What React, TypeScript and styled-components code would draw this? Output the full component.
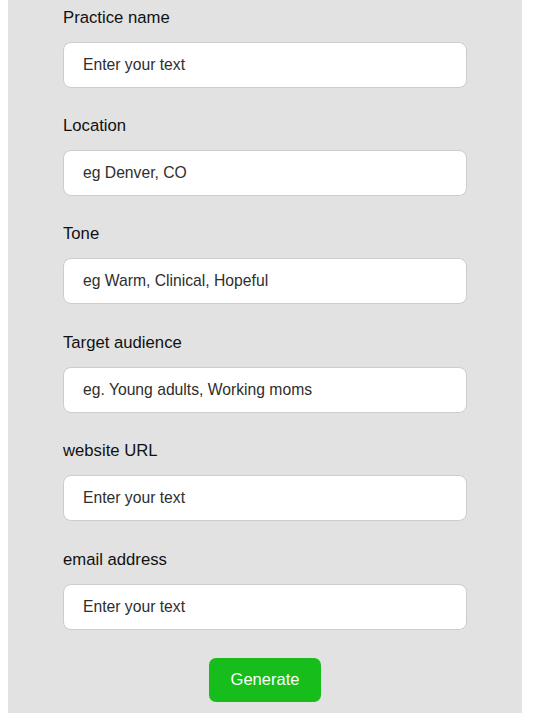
import { createGlobalStyle } from "styled-components";
import styled from "styled-components";

const GlobalStyle = createGlobalStyle`
  html, body {
    margin: 0;
    padding: 0;
    background: #ffffff;
  }
  body {
    padding: 0 8px 13px;
    font-family: "Liberation Sans", Arial, sans-serif;
  }
`;

const Panel = styled.div`
  width: 514px;
  box-sizing: border-box;
  background: #e2e2e2;
  padding: 7.6px 55px 11px;
  display: flex;
  flex-direction: column;
`;

const Field = styled.div`
  display: flex;
  flex-direction: column;
  margin-bottom: 28.4px;
  &:last-of-type {
    margin-bottom: 22.5px;
  }
`;

const Label = styled.label`
  font-size: 16.7px;
  line-height: 20px;
  color: #111111;
  margin-bottom: 14px;
`;

const Input = styled.input`
  box-sizing: border-box;
  width: 404px;
  height: 46px;
  border: 1px solid #cdcdcd;
  border-radius: 8px;
  background: #ffffff;
  padding: 0 19px;
  font-family: "Liberation Sans", Arial, sans-serif;
  font-size: 15.7px;
  color: #222222;
  outline: none;
  &::placeholder {
    color: #2e2e2e;
  }
`;

const Actions = styled.div`
  display: flex;
  justify-content: center;
`;

const GenerateButton = styled.button`
  width: 112px;
  height: 44px;
  border: none;
  border-radius: 7px;
  background: #17bd1a;
  color: #ffffff;
  font-family: "Liberation Sans", Arial, sans-serif;
  font-size: 16.5px;
  cursor: pointer;
`;

const fields = [
  { label: "Practice name", placeholder: "Enter your text" },
  { label: "Location", placeholder: "eg Denver, CO" },
  { label: "Tone", placeholder: "eg Warm, Clinical, Hopeful" },
  { label: "Target audience", placeholder: "eg. Young adults, Working moms" },
  { label: "website URL", placeholder: "Enter your text" },
  { label: "email address", placeholder: "Enter your text" },
];

function App() {
  return (
    <>
      <GlobalStyle />
      <Panel>
        {fields.map((item, index) => (
          <Field key={index}>
            <Label>{item.label}</Label>
            <Input type="text" placeholder={item.placeholder} />
          </Field>
        ))}
        <Actions>
          <GenerateButton>Generate</GenerateButton>
        </Actions>
      </Panel>
    </>
  );
}

export default App;
